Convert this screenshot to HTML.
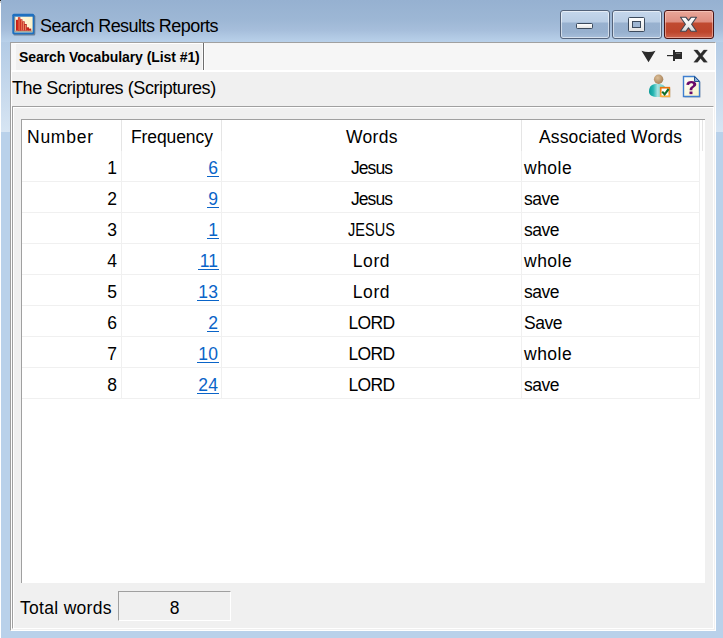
<!DOCTYPE html>
<html><head><meta charset="utf-8">
<style>
*{margin:0;padding:0;box-sizing:border-box}
html,body{width:723px;height:638px;overflow:hidden}
body{position:relative;font-family:"Liberation Sans",sans-serif;color:#000;
 background:linear-gradient(180deg,#96b1d1 0px,#9db7d5 20px,#a6bedb 30px,#b9d1ea 42px,#b9d1ea 638px);}
.a{position:absolute}
.t{position:absolute;white-space:nowrap;line-height:1}
.lk{color:#0a64c8}
.u{display:inline-block;height:17px;padding-left:1.5px;padding-right:0.3px;letter-spacing:0.2px;border-bottom:1px solid #0a64c8}
</style></head><body>
<!-- frame side bands -->
<div class="a" style="left:0;top:42px;width:10px;height:90px;background:linear-gradient(180deg,#b3cbe5,#d7e5f3)"></div>
<div class="a" style="left:716px;top:42px;width:7px;height:90px;background:linear-gradient(180deg,#b3cbe5,#d7e5f3)"></div>
<!-- left white edge -->
<div class="a" style="left:0;top:0;width:1px;height:638px;background:#fff"></div>
<div class="a" style="left:0;top:0;width:1px;height:1px;background:#202020"></div><div class="a" style="left:0;top:1px;width:1px;height:2px;background:#c8c8c8"></div>

<!-- app icon -->
<svg class="a" style="left:11px;top:13px" width="26" height="24" viewBox="0 0 26 24">
 <defs><linearGradient id="cr" x1="0" y1="0" x2="1" y2="0"><stop offset="0" stop-color="#fffbe6"/><stop offset="1" stop-color="#fdf2c8"/></linearGradient>
 <linearGradient id="br" x1="0" y1="0" x2="1" y2="0"><stop offset="0" stop-color="#c01a14"/><stop offset=".6" stop-color="#d8281c"/><stop offset="1" stop-color="#900c0c"/></linearGradient></defs>
 <rect x="2.3" y="2" width="22" height="20.5" rx="1.5" fill="#1d2c40" opacity=".45"/>
 <rect x="1.3" y="0.8" width="22" height="20.5" rx="1.5" fill="#1e70c0"/>
 <rect x="3.4" y="3.7" width="18.2" height="15.7" fill="url(#cr)"/>
 <line x1="3.8" y1="4" x2="3.8" y2="18.5" stroke="#6a6a6a" stroke-width=".9"/>
 <line x1="3.5" y1="18.2" x2="21.5" y2="18.2" stroke="#8a8a7a" stroke-width="1"/>
 <g fill="url(#br)">
  <rect x="5" y="6.8" width="2.4" height="10.9"/>
  <rect x="6.9" y="4.3" width="2.4" height="13.4"/>
  <rect x="9" y="6.3" width="2.4" height="11.4"/>
  <rect x="11.3" y="8.3" width="2.3" height="9.4"/>
  <rect x="13.3" y="11" width="2.4" height="6.7"/>
  <rect x="15.5" y="14.3" width="2.4" height="3.4"/>
  <rect x="17.6" y="15.6" width="2.6" height="2.1"/>
 </g>
 <g fill="#f4a070" opacity=".85">
  <rect x="7.6" y="5" width=".9" height="12"/>
  <rect x="9.8" y="7" width=".9" height="10"/>
  <rect x="12" y="9" width=".9" height="8"/>
  <rect x="14" y="12" width=".9" height="5"/>
 </g>
</svg>
<div class="t" style="left:40px;top:17px;font-size:18px;letter-spacing:-0.55px;color:#000">Search Results Reports</div>

<!-- window buttons -->
<div class="a" style="left:560px;top:10px;width:50px;height:29px;border:1px solid #54637a;border-radius:3px;background:linear-gradient(180deg,#c5d7ec 0,#b9cde4 11px,#98b1cf 12px,#97b0ce 21px,#aac1dc 28px);box-shadow:inset 0 0 0 1px rgba(255,255,255,.55)"></div>
<div class="a" style="left:576px;top:23px;width:17px;height:6px;border:1px solid #3c4a5c;border-radius:1.5px;background:linear-gradient(180deg,#ffffff,#e4e4e4)"></div>
<div class="a" style="left:612px;top:10px;width:50px;height:29px;border:1px solid #54637a;border-radius:3px;background:linear-gradient(180deg,#c5d7ec 0,#b9cde4 11px,#98b1cf 12px,#97b0ce 21px,#aac1dc 28px);box-shadow:inset 0 0 0 1px rgba(255,255,255,.55)"></div>
<div class="a" style="left:628px;top:17px;width:17px;height:15px;border:1px solid #3c4a5c;border-radius:1.5px;background:linear-gradient(180deg,#ffffff,#e4e4e4)"></div>
<div class="a" style="left:632px;top:21px;width:9px;height:7px;border:1px solid #3c4a5c;background:#9fb6d2"></div>
<div class="a" style="left:664px;top:10px;width:50px;height:29px;border:1px solid #4a1515;border-radius:3px;background:linear-gradient(180deg,#e9a79a 0,#df8e80 11px,#c04a30 12px,#bd452c 21px,#d06a55 28px);box-shadow:inset 0 0 0 1px rgba(255,220,210,.5)"></div>
<svg class="a" style="left:679px;top:16px" width="20" height="17" viewBox="0 0 20 17">
 <defs><linearGradient id="xg" x1="0" y1="0" x2="0" y2="1"><stop offset="0" stop-color="#ffffff"/><stop offset=".5" stop-color="#f0f0f0"/><stop offset="1" stop-color="#d8d8d8"/></linearGradient></defs>
 <path d="M1.5 1.3 L7 1.3 L9.5 4.6 L12 1.3 L17.5 1.3 L12.6 8.2 L17.5 15.3 L12 15.3 L9.5 11.8 L7 15.3 L1.5 15.3 L6.4 8.2 Z" fill="url(#xg)" stroke="#3e4552" stroke-width="1.1" stroke-linejoin="round"/>
</svg>

<!-- client area -->
<div class="a" style="left:10px;top:42px;width:706px;height:589px;background:#f0f0f0;border-left:1px solid #a0a0a0;border-top:1px solid #a0a0a0;border-right:1px solid #fff;border-bottom:1px solid #fff"></div>
<div class="a" style="left:11px;top:43px;width:704px;height:587px;border-left:1px solid #fff;border-top:1px solid #fff;border-right:1px solid #f0f0f0;border-bottom:1px solid #f0f0f0"></div>

<!-- tab strip -->
<div class="a" style="left:11px;top:43px;width:704px;height:29px;background:#f6f6f6;border-bottom:2px solid #fff"></div>
<div class="a" style="left:11px;top:43px;width:192px;height:27px;background:#f0f0f0;border-left:5px solid #f8f8f8;border-top:1px solid #fff"></div>
<div class="a" style="left:202px;top:43px;width:1px;height:27px;background:#fafafa"></div>
<div class="a" style="left:203px;top:43px;width:1px;height:27px;background:#6e6e6e"></div>
<div class="a" style="left:204px;top:43px;width:1px;height:27px;background:#fff"></div>
<div class="t" style="left:19px;top:50px;font-size:14px;font-weight:bold;letter-spacing:-0.07px">Search Vocabulary (List #1)</div>

<!-- tab strip icons -->
<svg class="a" style="left:640px;top:50px" width="17" height="13" viewBox="0 0 17 13"><path d="M1.5 0.8 Q8.5 3.3 15.5 0.8 L8.5 12.2 Z" fill="#2b2b2b"/></svg>
<svg class="a" style="left:666px;top:49px" width="18" height="13" viewBox="0 0 18 13">
 <rect x="1" y="6" width="6.5" height="1.2" fill="#2b2b2b"/>
 <rect x="7" y="1" width="2" height="11" fill="#2b2b2b"/>
 <rect x="8.5" y="3" width="7.5" height="7" fill="#2b2b2b"/>
 <rect x="10" y="4.2" width="4.5" height=".8" fill="#777"/>
</svg>
<svg class="a" style="left:693px;top:49px" width="16" height="15" viewBox="0 0 16 15"><path d="M0.8 1 L4.5 1 L7.6 4.82 L10.7 1 L14.4 1 L9.45 7.1 L14.4 13.2 L10.7 13.2 L7.6 9.38 L4.5 13.2 L0.8 13.2 L5.75 7.1 Z" fill="#2b2b2b" stroke="#2b2b2b" stroke-width=".3" stroke-linejoin="round"/></svg>

<!-- toolbar row -->
<div class="t" style="left:12px;top:79px;font-size:18px;letter-spacing:-0.42px">The Scriptures (Scriptures)</div>

<!-- person icon -->
<svg class="a" style="left:647px;top:73px" width="26" height="26" viewBox="0 0 26 26">
 <defs>
  <radialGradient id="hd" cx="40%" cy="35%" r="65%"><stop offset="0" stop-color="#dcbf98"/><stop offset="1" stop-color="#a8825a"/></radialGradient>
  <linearGradient id="bd" x1="0" y1="0" x2="1" y2="0"><stop offset="0" stop-color="#0a9a97"/><stop offset=".25" stop-color="#25b6b2"/><stop offset=".5" stop-color="#a4e2e0"/><stop offset=".8" stop-color="#7ad3d0"/><stop offset="1" stop-color="#2fb9b5"/></linearGradient>
  <linearGradient id="ob" x1="0" y1="0" x2="0" y2="1"><stop offset="0" stop-color="#e8730c"/><stop offset="1" stop-color="#fbb040"/></linearGradient>
 </defs>
 <path d="M2 18.5 C2 13 5.5 10.8 10.5 10.8 C15.5 10.8 19 13 19 18.5 C19 22.5 15.5 24 10.5 24 C5.5 24 2 22.5 2 18.5 Z" fill="url(#bd)"/>
 <circle cx="11.6" cy="6.2" r="4.7" fill="url(#hd)"/>
 <rect x="14.5" y="15.5" width="9" height="9" fill="#444" opacity=".25"/>
 <rect x="13.7" y="14.7" width="8.6" height="8.6" fill="#fff" stroke="url(#ob)" stroke-width="1.7"/>
 <path d="M15.2 18.6 L17.6 21.3 L21.6 16" fill="none" stroke="#0f6e2a" stroke-width="2.1"/>
</svg>
<!-- help doc icon -->
<svg class="a" style="left:682px;top:75px" width="21" height="24" viewBox="0 0 21 24">
 <defs><linearGradient id="dc" x1="0" y1="0" x2="1" y2="1"><stop offset="0" stop-color="#ffffff"/><stop offset="1" stop-color="#f7f3c6"/></linearGradient></defs>
 <path d="M2.5 2.5 L13.5 2.5 L18.5 7.5 L18.5 22.5 L2.5 22.5 Z" fill="#333" opacity=".3"/>
 <path d="M1.5 1.5 L12.5 1.5 L17.5 6.5 L17.5 21.5 L1.5 21.5 Z" fill="url(#dc)" stroke="#3f7fcf" stroke-width="1.4"/>
 <path d="M12.5 1.5 L12.5 6.5 L17.5 6.5 Z" fill="#8fb0e0" stroke="#24558f" stroke-width="1"/>
 <g transform="matrix(1.19,0,0,1,-2.37,0.94)"><path d="M5.6 8.8 C5.8 6.2 7.6 5.1 9.9 5.1 C12.4 5.1 14 6.5 14 8.4 C14 10.3 12.7 11 11.7 11.8 C10.9 12.4 10.7 12.9 10.7 14.2 L8.4 14.2 C8.4 12.4 8.8 11.5 10 10.6 C11 9.8 11.4 9.4 11.4 8.6 C11.4 7.8 10.8 7.2 9.8 7.2 C8.7 7.2 8.1 7.9 8 9 Z" fill="#6a0a6a"/>
 <rect x="8.3" y="15.6" width="2.5" height="2.6" fill="#6a0a6a"/></g>
</svg>

<!-- panel -->
<div class="a" style="left:12px;top:106px;width:702px;height:523px;border-left:1px solid #a0a0a0;border-top:1px solid #a0a0a0;border-right:1px solid #fff;border-bottom:1px solid #fff"></div>
<div class="a" style="left:13px;top:107px;width:700px;height:521px;border-left:1px solid #fff;border-top:1px solid #fff"></div>

<!-- listview -->
<div class="a" style="left:21px;top:119px;width:684px;height:464px;background:#fff;border-left:1px solid #a0a0a0;border-top:1px solid #a0a0a0"></div>
<!-- header dividers -->
<div class="a" style="left:121px;top:120px;width:1px;height:31px;background:#e5e5e5"></div>
<div class="a" style="left:221px;top:120px;width:1px;height:31px;background:#e5e5e5"></div>
<div class="a" style="left:521px;top:120px;width:1px;height:31px;background:#e5e5e5"></div>
<div class="a" style="left:699px;top:120px;width:1px;height:31px;background:#e5e5e5"></div>
<div class="a" style="left:702px;top:120px;width:1px;height:31px;background:#e5e5e5"></div>
<!-- grid verticals -->
<div class="a" style="left:121px;top:151px;width:1px;height:248px;background:#f0f0f0"></div>
<div class="a" style="left:221px;top:151px;width:1px;height:248px;background:#f0f0f0"></div>
<div class="a" style="left:521px;top:151px;width:1px;height:248px;background:#f0f0f0"></div>
<div class="a" style="left:699px;top:151px;width:1px;height:248px;background:#f0f0f0"></div>
<!-- grid horizontals -->
<div class="a" style="left:22px;top:181px;width:678px;height:1px;background:#f0f0f0"></div>
<div class="a" style="left:22px;top:212px;width:678px;height:1px;background:#f0f0f0"></div>
<div class="a" style="left:22px;top:243px;width:678px;height:1px;background:#f0f0f0"></div>
<div class="a" style="left:22px;top:274px;width:678px;height:1px;background:#f0f0f0"></div>
<div class="a" style="left:22px;top:305px;width:678px;height:1px;background:#f0f0f0"></div>
<div class="a" style="left:22px;top:336px;width:678px;height:1px;background:#f0f0f0"></div>
<div class="a" style="left:22px;top:367px;width:678px;height:1px;background:#f0f0f0"></div>
<div class="a" style="left:22px;top:398px;width:678px;height:1px;background:#f0f0f0"></div>

<!-- header text -->
<div class="t" style="left:27px;top:129px;font-size:17.5px;letter-spacing:0.75px">Number</div>
<div class="t" style="left:131px;top:129px;font-size:17.5px;letter-spacing:-0.1px">Frequency</div>
<div class="t" style="left:346px;top:129px;font-size:17.5px;letter-spacing:0.3px">Words</div>
<div class="t" style="left:539px;top:129px;font-size:17.5px;letter-spacing:0.15px">Associated Words</div>

<div class="t" style="left:22px;top:160px;width:95px;text-align:right;font-size:17.5px">1</div>
<div class="t lk" style="left:122px;top:160px;width:96.5px;text-align:right;font-size:17.5px"><span class="u">6</span></div>
<div class="t" style="left:222px;top:160px;width:299px;text-align:center;font-size:17.5px;letter-spacing:-0.9px">Jesus</div>
<div class="t" style="left:524px;top:160px;font-size:17.5px;letter-spacing:0.5px">whole</div>
<div class="t" style="left:22px;top:191px;width:95px;text-align:right;font-size:17.5px">2</div>
<div class="t lk" style="left:122px;top:191px;width:96.5px;text-align:right;font-size:17.5px"><span class="u">9</span></div>
<div class="t" style="left:222px;top:191px;width:299px;text-align:center;font-size:17.5px;letter-spacing:-0.9px">Jesus</div>
<div class="t" style="left:524px;top:191px;font-size:17.5px;letter-spacing:-0.5px">save</div>
<div class="t" style="left:22px;top:222px;width:95px;text-align:right;font-size:17.5px">3</div>
<div class="t lk" style="left:122px;top:222px;width:96.5px;text-align:right;font-size:17.5px"><span class="u">1</span></div>
<div class="t" style="left:222px;top:222px;width:299px;text-align:center;font-size:17.5px;transform:scaleX(0.83)">JESUS</div>
<div class="t" style="left:524px;top:222px;font-size:17.5px;letter-spacing:-0.5px">save</div>
<div class="t" style="left:22px;top:253px;width:95px;text-align:right;font-size:17.5px">4</div>
<div class="t lk" style="left:122px;top:253px;width:96.5px;text-align:right;font-size:17.5px"><span class="u">11</span></div>
<div class="t" style="left:222px;top:253px;width:299px;text-align:center;font-size:17.5px;letter-spacing:0.6px">Lord</div>
<div class="t" style="left:524px;top:253px;font-size:17.5px;letter-spacing:0.5px">whole</div>
<div class="t" style="left:22px;top:284px;width:95px;text-align:right;font-size:17.5px">5</div>
<div class="t lk" style="left:122px;top:284px;width:96.5px;text-align:right;font-size:17.5px"><span class="u">13</span></div>
<div class="t" style="left:222px;top:284px;width:299px;text-align:center;font-size:17.5px;letter-spacing:0.6px">Lord</div>
<div class="t" style="left:524px;top:284px;font-size:17.5px;letter-spacing:-0.5px">save</div>
<div class="t" style="left:22px;top:315px;width:95px;text-align:right;font-size:17.5px">6</div>
<div class="t lk" style="left:122px;top:315px;width:96.5px;text-align:right;font-size:17.5px"><span class="u">2</span></div>
<div class="t" style="left:222px;top:315px;width:299px;text-align:center;font-size:17.5px;letter-spacing:-0.6px">LORD</div>
<div class="t" style="left:524px;top:315px;font-size:17.5px;letter-spacing:-0.5px">Save</div>
<div class="t" style="left:22px;top:346px;width:95px;text-align:right;font-size:17.5px">7</div>
<div class="t lk" style="left:122px;top:346px;width:96.5px;text-align:right;font-size:17.5px"><span class="u">10</span></div>
<div class="t" style="left:222px;top:346px;width:299px;text-align:center;font-size:17.5px;letter-spacing:-0.6px">LORD</div>
<div class="t" style="left:524px;top:346px;font-size:17.5px;letter-spacing:0.5px">whole</div>
<div class="t" style="left:22px;top:377px;width:95px;text-align:right;font-size:17.5px">8</div>
<div class="t lk" style="left:122px;top:377px;width:96.5px;text-align:right;font-size:17.5px"><span class="u">24</span></div>
<div class="t" style="left:222px;top:377px;width:299px;text-align:center;font-size:17.5px;letter-spacing:-0.6px">LORD</div>
<div class="t" style="left:524px;top:377px;font-size:17.5px;letter-spacing:-0.5px">save</div>

<!-- footer -->
<div class="t" style="left:20px;top:600px;font-size:17.5px;letter-spacing:0.3px">Total words</div>
<div class="a" style="left:118px;top:591px;width:113px;height:30px;border-left:1px solid #a0a0a0;border-top:1px solid #a0a0a0;border-right:1px solid #fff;border-bottom:1px solid #fff"></div>
<div class="t" style="left:118px;top:600px;width:113px;text-align:center;font-size:17.5px">8</div>

</body></html>
